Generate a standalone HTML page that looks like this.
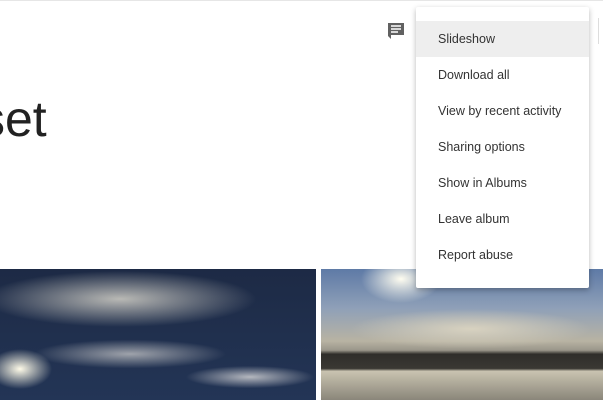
<!DOCTYPE html>
<html><head><style>
body{margin:0;width:603px;height:400px;overflow:hidden;background:#fff;position:relative;font-family:"Liberation Sans",sans-serif}
.top{position:absolute;left:0;top:0;width:603px;height:1px;background:#e6e6e6}
.title{position:absolute;left:-20px;top:89px;font-size:50px;color:#222;line-height:60px}
.p1{position:absolute;left:0;top:269px;width:316px;height:131px;background:
radial-gradient(ellipse 40px 25px at 20px 100px,#fffbe8,rgba(255,255,255,0) 80%),
radial-gradient(ellipse 170px 35px at 120px 30px,#b9b9b5,rgba(200,200,200,0) 80%),
radial-gradient(ellipse 120px 18px at 130px 85px,#9fa3ab,rgba(180,180,180,0) 80%),
radial-gradient(ellipse 80px 14px at 250px 108px,#b5b8bf,rgba(200,200,200,0) 80%),
linear-gradient(#1d2a45,#233556)}
.p2{position:absolute;left:321px;top:269px;width:282px;height:131px;background:
radial-gradient(ellipse 50px 30px at 80px 10px,#fffdf0,rgba(255,255,255,0) 80%),
radial-gradient(ellipse 150px 25px at 150px 60px,#d8d2c0,rgba(210,200,180,0) 80%),
linear-gradient(#5e7aa6 0,#8fa0b8 30%,#b8b3a3 55%,#9a968a 62%,#2f2e2a 65%,#3a3833 76%,#c9c3b0 78%,#8a867a 100%)}
.menu{position:absolute;left:416px;top:7px;width:173px;height:281px;background:#fff;box-shadow:0 2px 6px rgba(0,0,0,.28);border-radius:2px}
.it{position:absolute;left:0;width:173px;height:36px;line-height:36px;padding-left:22px;box-sizing:border-box;font-size:12.5px;color:#333}
.hl{background:#eeeeee}
</style></head><body>
<div class="top"></div>
<svg style="position:absolute;left:387px;top:22px" width="18" height="18" viewBox="0 0 18 18"><path d="M1 1h16v12H4v4L1 14z" fill="#616161"/><path d="M4 4h10M4 7h10M4 10h7" stroke="#fff" stroke-width="1.4"/></svg>
<div style="position:absolute;left:598px;top:18px;width:5px;height:26px;border-left:1px solid #ddd"></div>
<div class="title">set</div>
<div class="p1"></div>
<div class="p2"></div>
<div class="menu">
<div class="it hl" style="top:14px">Slideshow</div>
<div class="it" style="top:50px">Download all</div>
<div class="it" style="top:86px">View by recent activity</div>
<div class="it" style="top:122px">Sharing options</div>
<div class="it" style="top:158px">Show in Albums</div>
<div class="it" style="top:194px">Leave album</div>
<div class="it" style="top:230px">Report abuse</div>
</div>
</body></html>
